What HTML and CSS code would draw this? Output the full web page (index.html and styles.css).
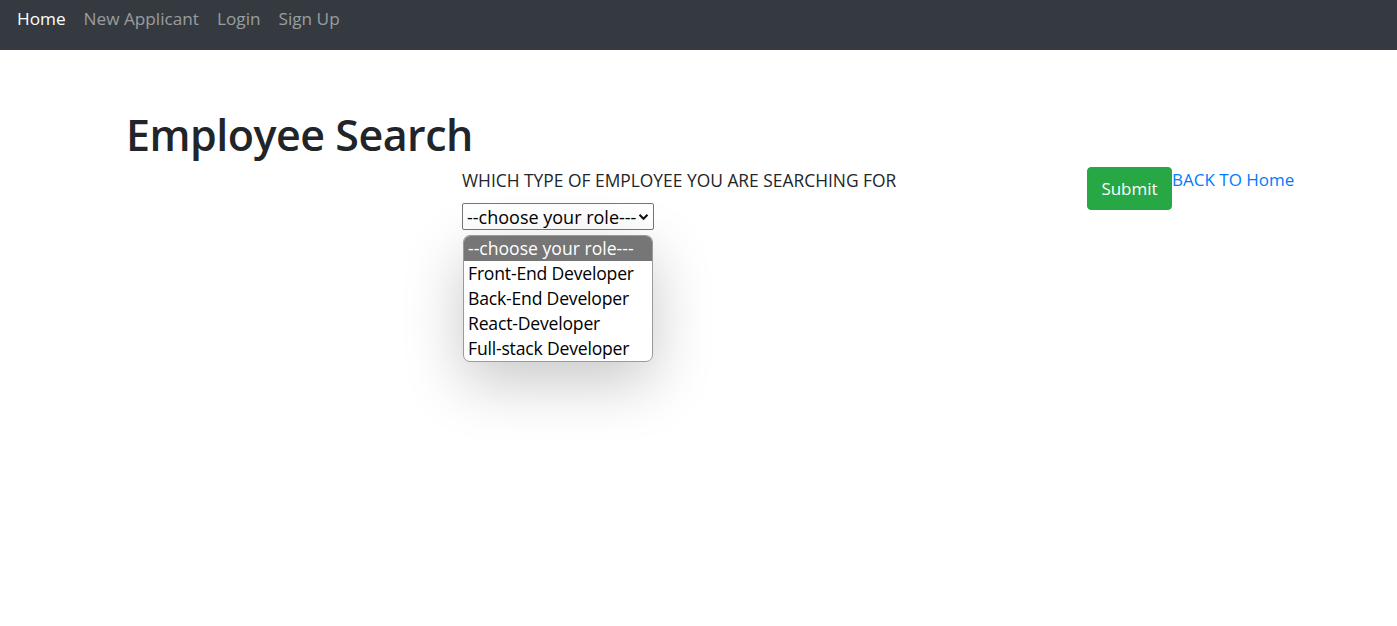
FILE: index.html
```html
<!DOCTYPE html>
<html lang="en">
<head>
<meta charset="utf-8">
<title>Employee Search</title>
<link rel="stylesheet" href="styles.css">
</head>
<body>
<nav class="navbar">
  <a class="nav-link active" href="#">Home</a>
  <a class="nav-link" href="#">New Applicant</a>
  <a class="nav-link" href="#">Login</a>
  <a class="nav-link" href="#">Sign Up</a>
</nav>
<main class="page">
  <h1 class="title">Employee Search</h1>
  <form class="search-row">
    <div class="field">
      <label class="field-label">WHICH TYPE OF EMPLOYEE YOU ARE SEARCHING FOR</label>
      <div class="picker">
        <div class="picker-box">
          <span class="picker-text">--choose your role---</span>
          <svg class="chev" width="11" height="8" viewBox="0 0 11 8"><path d="M1.5 1.8 L5.5 5.8 L9.5 1.8" fill="none" stroke="#111" stroke-width="2"/></svg>
        </div>
        <div class="role-menu">
          <div class="role-item current">--choose your role---</div>
          <div class="role-item">Front-End Developer</div>
          <div class="role-item">Back-End Developer</div>
          <div class="role-item">React-Developer</div>
          <div class="role-item">Full-stack Developer</div>
        </div>
      </div>
    </div>
    <button class="btn-submit" type="button">Submit</button>
    <a class="back-link" href="#">BACK TO Home</a>
  </form>
</main>
</body>
</html>
```
FILE: styles.css
```css
* { box-sizing: border-box; }
html, body { margin: 0; padding: 0; }
html { background: #fff; }
body {
  font-family: "Open Sans", "Noto Sans", sans-serif;
  font-size: 18px;
  color: #212529;
  min-height: 626px;
}
.navbar {
  height: 50px;
  background: #343a40;
  display: flex;
  align-items: flex-start;
  padding: 7px 0 0 8px;
}
.nav-link {
  color: rgba(255,255,255,.5);
  text-decoration: none;
  font-size: 17.2px;
  line-height: 24px;
  padding: 0 9px;
}
.nav-link.active { color: #fff; }
.page {
  padding: 58px 0 0 126px;
  min-height: 576px;
}
.title {
  margin: 0;
  font-size: 43px;
  font-weight: 600;
  line-height: 54px;
  letter-spacing: -0.5px;
}
.search-row {
  display: flex;
  align-items: flex-start;
  margin-left: 336px;
  margin-top: 4px;
  min-height: 300px;
}
.field {
  width: 625px;
  display: flex;
  flex-direction: column;
  align-items: flex-start;
}
.field-label {
  font-size: 17.4px;
  line-height: 26px;
  margin-top: 1px;
}
.picker { position: relative; margin-top: 10px; }
.picker-box {
  width: 192px;
  height: 27px;
  border: 1px solid #767676;
  border-radius: 2px;
  display: flex;
  align-items: center;
  justify-content: space-between;
  padding: 0 4px 0 4px;
  font-size: 18px;
  color: #000;
}
.chev { flex: none; }
.role-menu {
  position: absolute;
  left: 1px;
  top: 32px;
  width: 190px;
  background: #fff;
  border: 1px solid #9a9a9a;
  border-radius: 7px;
  overflow: hidden;
  box-shadow: 0 20px 60px rgba(0,0,0,.22);
  z-index: 5;
}
.role-item {
  height: 25px;
  line-height: 25px;
  padding-left: 4px;
  font-size: 17.6px;
  letter-spacing: -0.2px;
  color: #000;
  white-space: nowrap;
}
.role-item.current { background: #767676; color: #fff; letter-spacing: 0; }
.btn-submit {
  font-family: inherit;
  font-size: 17px;
  color: #fff;
  background: #28a745;
  border: 1px solid #28a745;
  border-radius: 4px;
  width: 85px;
  height: 43px;
  padding: 0;
  margin-top: 1px;
}
.back-link {
  color: #007bff;
  text-decoration: none;
  font-size: 17px;
  line-height: 26px;
  margin-top: 1px;
}
```
